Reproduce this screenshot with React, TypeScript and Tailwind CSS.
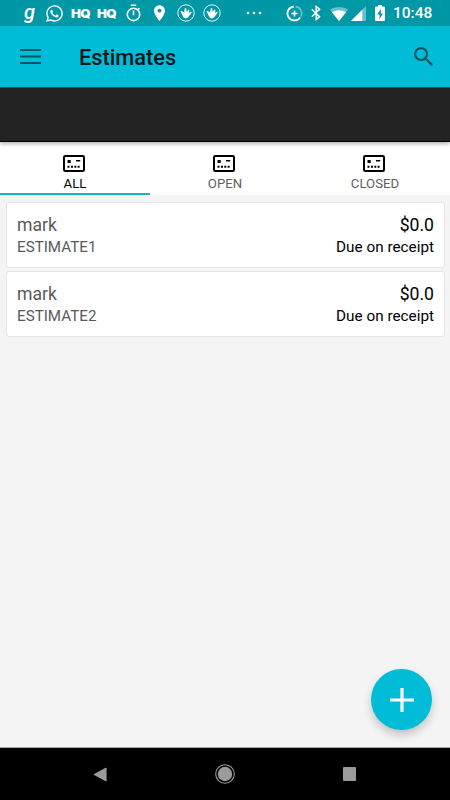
import { FaWhatsapp } from 'react-icons/fa'

interface Estimate {
  id: string
  customer: string
  amount: string
  terms: string
}

const estimates: Estimate[] = [
  { id: 'ESTIMATE1', customer: 'mark', amount: '$0.0', terms: 'Due on receipt' },
  { id: 'ESTIMATE2', customer: 'mark', amount: '$0.0', terms: 'Due on receipt' },
]

const tabs = ['ALL', 'OPEN', 'CLOSED']

function HqIcon({ className }: { className: string }) {
  return (
    <span className={`w-5 shrink-0 origin-left scale-x-115 pt-[2px] whitespace-nowrap font-['Inter'] text-[11.5px] leading-[24px] font-black tracking-[-0.5px] ${className}`}>
      HQ
    </span>
  )
}

function HandIcon({ className }: { className: string }) {
  return (
    <svg viewBox="0 0 18 18" className={`h-[18px] w-[18px] shrink-0 ${className}`}>
      <circle cx="9" cy="9" r="8.2" fill="none" stroke="white" strokeWidth="0.9" />
      <path
        d="M6.6 13.600 3.600 7.600Q3.700 6.500 4.700 6.900L7.200 8.600 7.700 4.400Q8.500 3.400 9.200 4.400L9.700 8 11.400 5.600Q12.200 5 12.400 6L12 8.900 13.900 7.800Q14.900 7.700 14.500 8.800L11 13.400 8.600 14.600z"
        fill="white"
      />
    </svg>
  )
}

function StatusBar() {
  return (
    <div className="flex h-[26px] items-center bg-[#0097a7] text-white">
      <span className="-mt-[3px] ml-[24px] w-[13px] shrink-0 text-[20px] leading-[26px] font-medium italic">g</span>
      <FaWhatsapp className="ml-[8px] h-[19px] w-[19px] shrink-0" />
      <HqIcon className="ml-[7px]" />
      <HqIcon className="ml-[6px]" />
      {/* Timer */}
      <svg viewBox="0 0 17 18" className="ml-[8px] h-[18px] w-[17px] shrink-0" fill="none" stroke="white" strokeWidth="1.6">
        <circle cx="8.5" cy="10.4" r="6.2" />
        <path d="M5.8 1.3h5.4M8.5 6.6v4.6M13.2 5.4l1.2-1.2" />
      </svg>
      {/* Location */}
      <svg viewBox="5 2 14 20" className="ml-[12px] h-[16px] w-[11px] shrink-0" fill="white">
        <path d="M12 2C8.13 2 5 5.13 5 9c0 5.25 7 13 7 13s7-7.75 7-13c0-3.87-3.13-7-7-7zm0 9.5a2.5 2.5 0 0 1 0-5 2.5 2.5 0 0 1 0 5z" />
      </svg>
      <HandIcon className="ml-[12px]" />
      <HandIcon className="ml-[8px]" />
      <svg viewBox="0 0 16 4" className="ml-[25px] h-[4px] w-[16px] shrink-0" fill="white">
        <circle cx="2" cy="2" r="1.3" />
        <circle cx="8" cy="2" r="1.3" />
        <circle cx="14" cy="2" r="1.3" />
      </svg>
      {/* Data saver */}
      <svg viewBox="0 0 17 17" className="ml-[24px] h-[17px] w-[17px] shrink-0" fill="none" stroke="white" strokeWidth="1.8">
        <path d="M9.5 1.5A7 7 0 0 1 14.8 11.6" opacity="0.4" />
        <path d="M7.8 1.5A7 7 0 1 0 14.2 12.5" />
        <path d="M8.5 5.4v6.2M5.4 8.5h6.2" strokeWidth="1.6" />
      </svg>
      {/* Bluetooth */}
      <svg viewBox="0 0 10 16" className="ml-[8px] h-[16px] w-[10px] shrink-0" fill="none" stroke="white" strokeWidth="1.5">
        <path d="M.8 4.2 8.6 11.6 5.2 14.5v-13L8.6 4.4.8 11.8" />
      </svg>
      {/* Wifi */}
      <svg viewBox="0 0 18 14" className="mt-px ml-[9px] h-[14px] w-[18px] shrink-0" fill="white">
        <path d="M9 14 0 2.8C2.4.9 5.5 0 9 0s6.6.9 9 2.8z" opacity="0.4" />
        <path d="M9 14 2 5.3C4 3.9 6.3 3.2 9 3.2s5 .7 7 2.1z" />
      </svg>
      {/* Signal */}
      <svg viewBox="0 0 15 15" className="mt-px ml-[3px] h-[15px] w-[15px] shrink-0" fill="white">
        <path d="M0 15 15 0v15z" opacity="0.4" />
        <path d="M0 15 11.3 3.7V15z" />
      </svg>
      {/* Battery */}
      <svg viewBox="0 0 10 16" className="ml-[9px] h-[16px] w-[10px] shrink-0">
        <path d="M3 0h4v1.6h2q1 0 1 1V15q0 1-1 1H1q-1 0-1-1V2.6q0-1 1-1h2z" fill="white" />
        <path d="M5.8 4 2.2 9.6h2.3V14L8 8.4H5.8z" fill="#0097a7" />
      </svg>
      <span className="mt-[2px] ml-[8px] text-[15.5px] leading-none font-medium">10:48</span>
    </div>
  )
}

function EstimateIcon() {
  return (
    <svg viewBox="0 0 22 17" className="mr-[2px] h-[17px] w-[22px] shrink-0">
      <rect x="1" y="1" width="20" height="15" rx="1.2" fill="none" stroke="black" strokeWidth="2" />
      <path d="M4.5 5h3.2v3H4.5zM13 5h4.2v1.6H13zM4.5 10.8h2v2h-2zM8 10.8h2v2H8zM11.3 10.8h2v2h-2zM14.6 10.8h2v2h-2z" fill="black" />
    </svg>
  )
}

function EstimateCard({ estimate }: { estimate: Estimate }) {
  return (
    <div className="flex h-[66px] justify-between rounded-[3px] border border-[#e6e6e6] bg-white px-[10px] pt-[11px]">
      <div className="text-[#5a5a5a]">
        <div className="text-[17.6px] leading-[22px]">{estimate.customer}</div>
        <div className="text-[15.2px] leading-[22px]">{estimate.id}</div>
      </div>
      <div className="text-right text-black">
        <div className="text-[17.6px] leading-[22px]">{estimate.amount}</div>
        <div className="text-[15.3px] leading-[22px]">{estimate.terms}</div>
      </div>
    </div>
  )
}

export default function App() {
  return (
    <div className="relative flex h-[800px] w-[450px] flex-col overflow-hidden bg-[#f4f4f4] font-['Roboto',sans-serif]">
      <StatusBar />

      <header className="flex h-[62px] items-center border-b border-[#0b6570] bg-[#00bcd7] px-[20px]">
        <svg viewBox="0 0 21 15" className="h-[15px] w-[21px]" fill="#075660">
          <path d="M0 0h21v2H0zM0 6.5h21v2H0zM0 13h21v2H0z" />
        </svg>
        <h1 className="ml-[38px] pt-[2px] text-[21.8px] leading-none font-medium text-[#03171a]">Estimates</h1>
        <svg viewBox="3 3 17.5 17.5" className="-mr-[3px] ml-auto h-[19px] w-[19px]" fill="#075660">
          <path d="M15.5 14h-.79l-.28-.27A6.471 6.471 0 0 0 16 9.5 6.5 6.5 0 1 0 9.5 16c1.61 0 3.09-.59 4.23-1.57l.27.28v.79l5 4.99L20.49 19l-4.99-5zm-6 0C7.01 14 5 11.99 5 9.5S7.01 5 9.5 5 14 7.01 14 9.5 11.99 14 9.5 14z" />
        </svg>
      </header>

      {/* Ad banner slot */}
      <div className="z-10 h-[54px] border-b border-black bg-[#232323] shadow-[0_2px_4px_rgba(0,0,0,0.3)]" />

      <nav className="grid h-[53px] grid-cols-3 bg-white">
        {tabs.map((tab, index) => (
          <div
            key={tab}
            className={`flex flex-col items-center border-b-2 pt-[13px] ${
              index === 0 ? 'border-[#1bb1cb] text-black' : 'border-transparent text-[#606060]'
            }`}
          >
            <EstimateIcon />
            <span className="mt-[4px] text-[13.2px] leading-[16px]">{tab}</span>
          </div>
        ))}
      </nav>

      <main className="flex flex-1 flex-col gap-[3px] pt-[7px] pr-[5px] pl-[6px]">
        {estimates.map((estimate) => (
          <EstimateCard key={estimate.id} estimate={estimate} />
        ))}
      </main>

      <button className="absolute top-[669px] left-[371px] flex h-[61px] w-[61px] items-center justify-center rounded-full bg-[#00bcd7] shadow-[0_5px_9px_rgba(0,0,0,0.2)]">
        <svg viewBox="0 0 24 24" className="h-[24px] w-[24px]" fill="white">
          <path d="M10.4 0h3.2v10.4H24v3.2H13.6V24h-3.2V13.6H0v-3.2h10.4z" />
        </svg>
      </button>

      <div className="flex h-[53px] items-center border-t border-[#aaa] bg-black pl-[93px]">
        <svg viewBox="0 0 14 16" className="h-[15px] w-[14px]" fill="#9b9b9b">
          <path d="M13 .8q1-.4 1 .6v13.2q0 1-1 .6L.8 8.6q-.8-.6 0-1.2z" />
        </svg>
        <svg viewBox="0 0 20 20" className="ml-[108px] h-[20px] w-[20px]">
          <circle cx="10" cy="10" r="9.3" fill="none" stroke="#9b9b9b" strokeWidth="1.1" />
          <circle cx="10" cy="10" r="7.2" fill="#9b9b9b" />
        </svg>
        <div className="ml-[108px] h-[14px] w-[13px] rounded-[1px] bg-[#9b9b9b]" />
      </div>
    </div>
  )
}
